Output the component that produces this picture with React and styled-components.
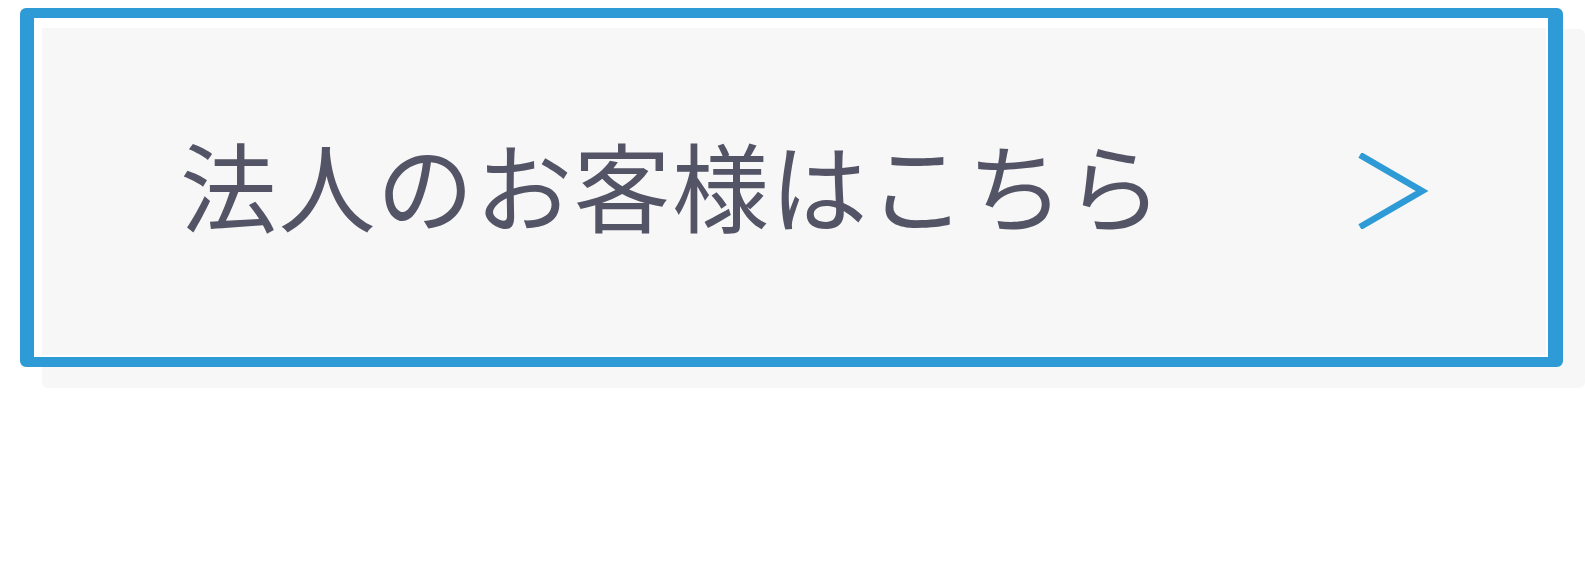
import React from "react";
import styled, { createGlobalStyle } from "styled-components";

const GlobalStyle = createGlobalStyle`
  html, body {
    margin: 0;
    padding: 0;
    background: #ffffff;
  }
  body {
    font-family: "Noto Sans CJK JP", "Noto Sans", sans-serif;
  }
`;

const Page = styled.div`
  padding: 8px 22px 0 20px;
  overflow: hidden;
  height: 570px;
  box-sizing: border-box;
`;

const Frame = styled.a`
  display: flex;
  box-sizing: border-box;
  height: 359px;
  border-style: solid;
  border-color: #2e9bd6;
  border-width: 10px 15px 10px 14px;
  border-radius: 6px;
  padding: 10px 2px 2px 8px;
  background: #ffffff;
  box-shadow: 22px 21px 0 0 #f7f7f7;
  text-decoration: none;
  cursor: pointer;
`;

const Inner = styled.div`
  flex: 1;
  display: flex;
  align-items: center;
  justify-content: space-between;
  background: #f7f7f7;
  padding: 0 116px 10px 138px;
`;

const Label = styled.span`
  font-family: "Noto Sans CJK JP", "Noto Sans", sans-serif;
  font-size: 97px;
  line-height: 1;
  font-weight: 400;
  letter-spacing: 1.4px;
  color: #545467;
  white-space: nowrap;
  margin-bottom: 8px;
`;

const Chevron = styled.svg`
  display: block;
  width: 72px;
  height: 76px;
  margin-top: 8px;
`;

export default function App() {
  return (
    <>
      <GlobalStyle />
      <Page>
        <Frame href="#">
          <Inner>
            <Label>法人のお客様はこちら</Label>
            <Chevron viewBox="0 0 72 76" aria-hidden="true">
              <polyline
                points="2,2 64,38 2,74"
                fill="none"
                stroke="#2e9bd6"
                strokeWidth="6.5"
                strokeLinejoin="miter"
                strokeMiterlimit="10"
              />
            </Chevron>
          </Inner>
        </Frame>
      </Page>
    </>
  );
}
